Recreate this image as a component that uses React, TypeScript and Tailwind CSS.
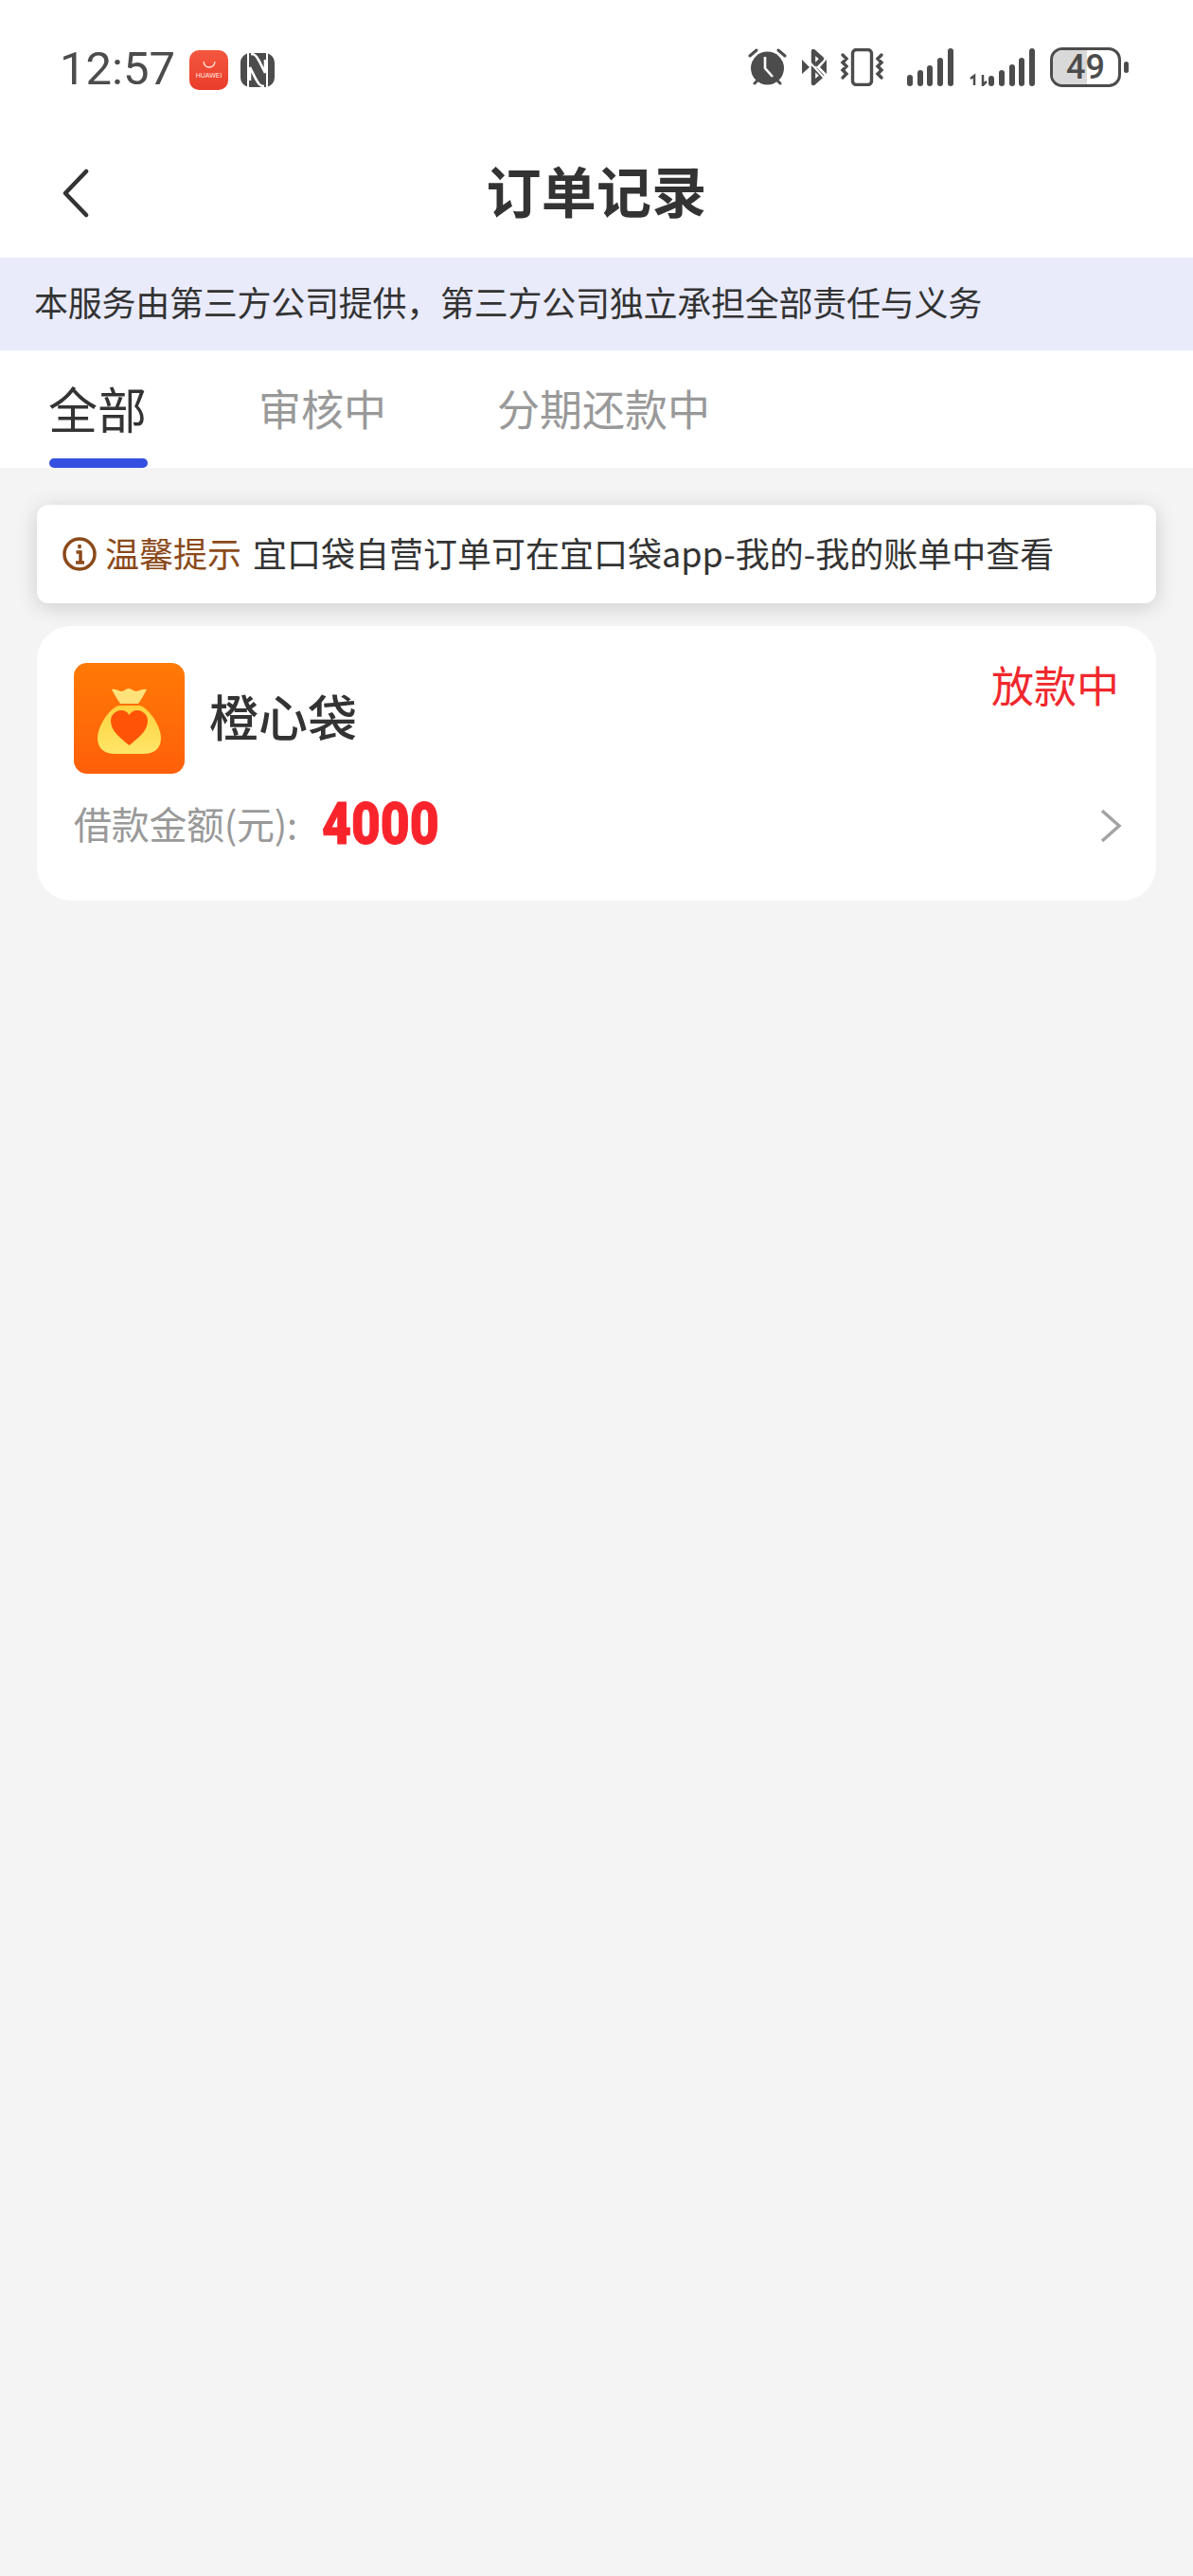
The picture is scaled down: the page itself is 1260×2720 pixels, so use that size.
const cjk = "font-['Noto_Sans_CJK_SC','Noto_Sans',sans-serif]";

const StatusLeft = () => (
  <div className="flex items-center">
    <span className="font-['Roboto',sans-serif] text-[49px] leading-none text-[#4c4c4c] w-[137px] -mt-[2px]">12:57</span>
    <div className="w-[41px] h-[42px] rounded-[10px] bg-[linear-gradient(#f4573f,#e93d2a)] flex flex-col items-center justify-center">
      <svg width="16" height="9" viewBox="0 0 16 9" className="mb-[3px]">
        <path d="M2 1c1 8 11 8 12 0" fill="none" stroke="#ffe9e0" strokeWidth="1.3" />
      </svg>
      <span className="font-['Liberation_Sans',sans-serif] text-[7px] leading-none text-[#ffe9e0]">HUAWEI</span>
    </div>
    <svg width="38" height="38" viewBox="0 0 38 38" className="ml-[12px]">
      <rect x="1" y="1" width="36" height="36" rx="10" fill="#4c4c4c" />
      <path d="M9 0v38M29 0v38" stroke="#fff" strokeWidth="2" />
      <path d="M12 2c5 0 6 3 9 8l6 12V8M26 36c-5 0-6-3-9-8l-6-12v14" fill="none" stroke="#fff" strokeWidth="2.6" />
    </svg>
  </div>
);

const StatusRight = () => (
  <div className="flex items-center">
    <svg width="41" height="40" viewBox="0 0 41 40">
      <circle cx="20.5" cy="21" r="17.5" fill="#4c4c4c" />
      <path d="M2 8l7-6M39 8l-7-6M7 37l4-4M34 37l-4-4" stroke="#4c4c4c" strokeWidth="3" strokeLinecap="round" />
      <path d="M18 9v12l8 9" fill="none" stroke="#fff" strokeWidth="2.6" />
    </svg>
    <svg width="28" height="40" viewBox="0 0 28 40" className="ml-[15px]">
      <path d="M13 20V3l9 8-7 7M13 20v17l9-8-7-7" fill="none" stroke="#4c4c4c" strokeWidth="4.4" strokeLinejoin="round" />
      <path d="M1 12l8 8-8 7zM27 12l-7 8 7 7z" fill="#4c4c4c" />
      <path d="M3 8l23 25" stroke="#fff" strokeWidth="2" />
    </svg>
    <svg width="47" height="40" viewBox="0 0 47 40" className="ml-[13px]">
      <rect x="13.5" y="1.5" width="20" height="37" rx="4" fill="none" stroke="#4c4c4c" strokeWidth="3.4" />
      <path d="M3 7l4 4-4 4 4 4-4 4 4 4-4 4M44 7l-4 4 4 4-4 4 4 4-4 4 4 4" fill="none" stroke="#4c4c4c" strokeWidth="3.4" strokeLinecap="round" />
    </svg>
    <svg width="49" height="40" viewBox="0 0 49 40" className="ml-[24px]">
      <rect x="0" y="28" width="6" height="12" rx="3" fill="#4c4c4c" />
      <rect x="11" y="23" width="6" height="17" rx="3" fill="#4c4c4c" />
      <rect x="21" y="18" width="6" height="22" rx="3" fill="#4c4c4c" />
      <rect x="32" y="10" width="6" height="30" rx="3" fill="#4c4c4c" />
      <rect x="43" y="0" width="6" height="40" rx="3" fill="#4c4c4c" />
    </svg>
    <svg width="70" height="40" viewBox="0 0 70 40" className="ml-[16px]">
      <path d="M6 39V29l-4 3M15 28v11l4-4" fill="none" stroke="#4c4c4c" strokeWidth="2.5" />
      <rect x="21" y="29" width="6" height="11" rx="3" fill="#4c4c4c" />
      <rect x="32" y="23" width="6" height="17" rx="3" fill="#4c4c4c" />
      <rect x="43" y="17" width="6" height="23" rx="3" fill="#4c4c4c" />
      <rect x="53" y="10" width="6" height="30" rx="3" fill="#4c4c4c" />
      <rect x="64" y="0" width="6" height="40" rx="3" fill="#4c4c4c" />
    </svg>
    <div className="ml-[16px] relative w-[75px] h-[42px] rounded-[13px] border-[3px] border-[#4c4c4c] overflow-hidden flex items-center justify-center">
      <div className="absolute left-0 top-0 bottom-0 w-[36px] bg-[#d9d9d9]" />
      <span className="relative font-['Roboto',sans-serif] font-medium text-[36px] leading-none text-[#4c4c4c]">49</span>
    </div>
    <div className="ml-[3px] w-[5px] h-[12px] rounded-full bg-[#4c4c4c]" />
  </div>
);

const OrderIcon = () => (
  <div className="w-[117px] h-[117px] rounded-[14px] bg-[linear-gradient(#ff7a06,#ff5f0a)] shrink-0 flex items-center justify-center">
    <svg width="67" height="74" viewBox="0 0 67 74">
      <defs>
        <linearGradient id="bag" x1="0" y1="0" x2="0" y2="1">
          <stop offset="0" stopColor="#ffd23e" />
          <stop offset="1" stopColor="#ffe668" />
        </linearGradient>
      </defs>
      <path d="M15 6c5-1 7 2 10 2 3 0 5-3 8-3s5 3 8 3c3 0 6-3 11-2l-5 9-4 6H24l-4-6z" fill="#ffe27a" />
      <path d="M22 23h23c12 5 22 24 22 34 0 12-8 17-18 17H18C8 74 0 69 0 57c0-10 10-29 22-34z" fill="url(#bag)" />
      <path d="M33.500 65C24 57 14 50 14 39c0-7 6-11 11-11 4 0 7 2 8.500 5 1.500-3 4.500-5 8.500-5 5 0 11 4 11 11 0 11-10 18-19.500 26z" fill="#ff5408" />
    </svg>
  </div>
);

export default function App() {
  return (
    <div className={`${cjk} w-[1260px] min-h-[2720px] bg-[#f4f4f5] flex flex-col`}>
      <div className="h-[134px] bg-white pl-[63px] pt-[50px] pr-[68px] flex items-start justify-between">
        <StatusLeft />
        <StatusRight />
      </div>

      <div className="relative h-[138px] bg-white flex items-center justify-center">
        <svg width="30" height="52" viewBox="0 0 30 52" className="absolute left-[65px] top-[44px]">
          <path d="M26 3L4 26l22 23" fill="none" stroke="#333" strokeWidth="4.500" strokeLinecap="round" strokeLinejoin="round" />
        </svg>
        <h1 className="text-[58px] leading-none font-bold text-[#333] tracking-[0.3px] -mt-[6px]">订单记录</h1>
      </div>

      <div className="h-[98px] bg-[#e9ebfb] pl-[36px] pb-[6px] flex items-center text-[36px] tracking-[-0.25px] leading-none text-[#333]">
        本服务由第三方公司提供，第三方公司独立承担全部责任与义务
      </div>

      <div className="relative h-[124px] bg-white flex items-center pl-[51px] pb-[3px]">
        <div className="w-[222px] text-[52px] leading-none text-[#333]">全部</div>
        <div className="w-[252px] text-[45px] leading-none text-[#999]">审核中</div>
        <div className="text-[45px] leading-none text-[#999]">分期还款中</div>
        <div className="absolute left-[52px] bottom-0 w-[104px] h-[10px] rounded-full bg-[#3550e0]" />
      </div>

      <div className="mt-[39px] mx-[39px] h-[104px] rounded-[12px] bg-white shadow-[0_4px_22px_rgba(0,0,0,0.16)] flex items-center pl-[27px]">
        <svg width="36" height="36" viewBox="0 0 36 36">
          <circle cx="18" cy="18" r="16" fill="none" stroke="#8b4a1a" strokeWidth="3.500" />
          <path d="M18 8v4M14.500 16H19v11M14 27h9" fill="none" stroke="#8b4a1a" strokeWidth="3.500" />
        </svg>
        <span className="ml-[9px] text-[36px] leading-none text-[#8b4a1a] -mt-[5px]">温馨提示</span>
        <span className="ml-[12px] text-[36px] leading-none text-[#333] -mt-[5px]">宜口袋自营订单可在宜口袋app-我的-我的账单中查看</span>
      </div>

      <div className="mt-[24px] mx-[39px] h-[290px] rounded-[36px] bg-white pl-[39px] pr-[36px] pt-[39px]">
        <div className="flex items-start justify-between">
          <div className="flex items-center">
            <OrderIcon />
            <span className="ml-[26px] text-[52px] leading-none font-medium text-[#333] -mt-[6px]">橙心袋</span>
          </div>
          <span className="text-[45px] leading-none text-[#f0282d] mr-[3px]">放款中</span>
        </div>
        <div className="mt-[26px] flex items-center justify-between">
          <div className="flex items-center">
            <span className="text-[40px] leading-none tracking-[-0.3px] text-[#999] -mt-[6px]">借款金额(元):</span>
            <span className="ml-[26px] origin-left scale-x-[0.86] font-['Roboto',sans-serif] font-black text-[62px] leading-none text-[#f9242b] [-webkit-text-stroke:1px_#f9242b] -mt-[4px]">4000</span>
          </div>
          <svg width="24" height="38" viewBox="0 0 24 38">
            <path d="M3 3l18 16L3 35" fill="none" stroke="#a3a3a3" strokeWidth="3.500" />
          </svg>
        </div>
      </div>
    </div>
  );
}
